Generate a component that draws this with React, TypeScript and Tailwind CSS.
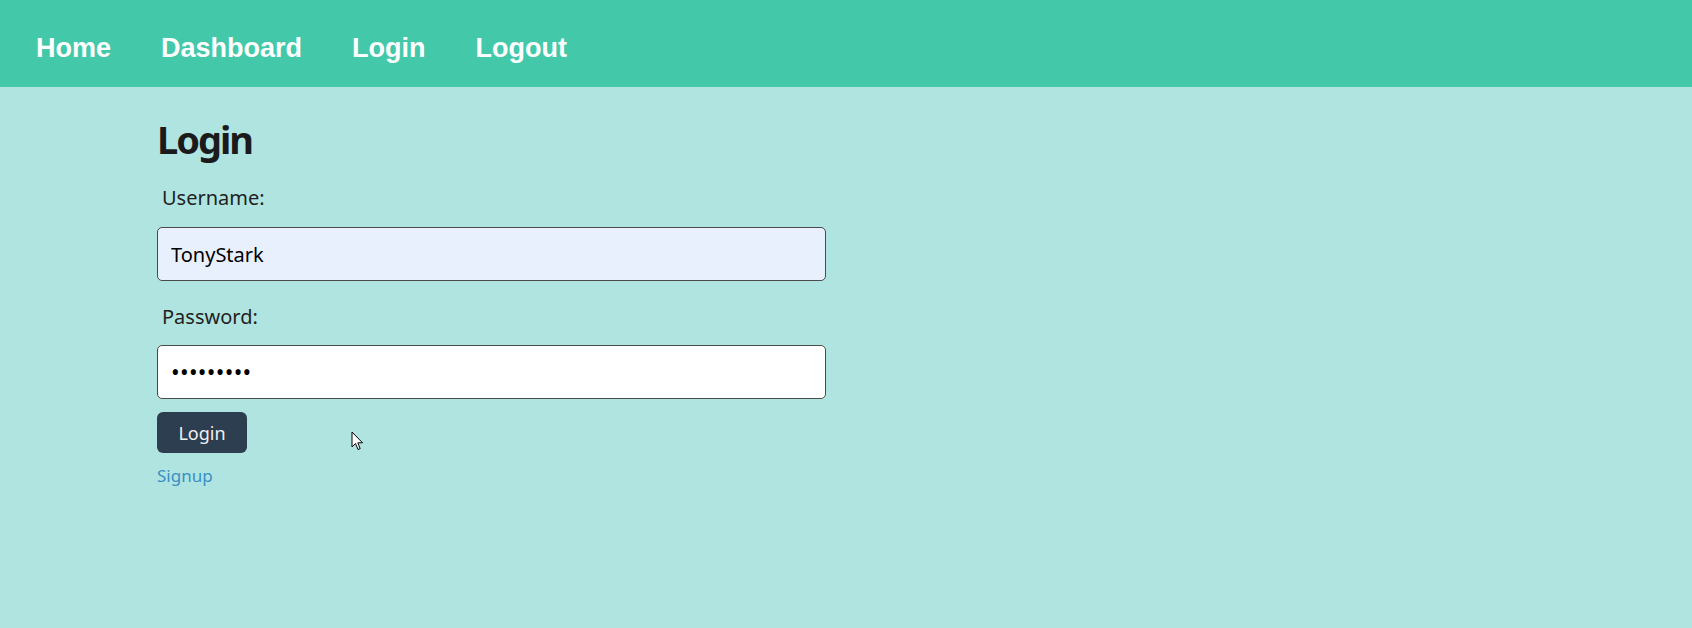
import React from "react";

export default function App() {
  return (
    <div className="min-h-[628px] w-full bg-[#b0e4e1] relative" style={{ fontFamily: '"Noto Sans", sans-serif' }}>
      <nav className="h-[87px] bg-[#43c9aa] pl-[11px] pt-[32px] flex" style={{ fontFamily: '"Liberation Sans", Arial, sans-serif' }}>
        {["Home", "Dashboard", "Login", "Logout"].map((t) => (
          <a key={t} className="px-[25px] text-[27px] leading-[32px] font-bold text-white">
            {t}
          </a>
        ))}
      </nav>
      <div className="ml-[157px] w-[669px] flex flex-col items-start">
        <h1 className="mt-[28px] text-[38px] leading-[48px] font-bold tracking-[-2px] text-[#1b1b1b]">Login</h1>
        <label className="mt-[21px] pl-[5px] text-[20px] leading-[28px] text-[#222]">Username:</label>
        <input
          readOnly
          defaultValue="TonyStark"
          className="mt-[15px] w-[669px] h-[54px] rounded-[5px] border border-[#4a4a4a] bg-[#e8f0fe] px-[13px] text-[20px] text-black outline-none"
        />
        <label className="mt-[22px] pl-[5px] text-[20px] leading-[28px] text-[#222]">Password:</label>
        <input
          readOnly
          type="password"
          defaultValue="TonyStark"
          className="mt-[14px] w-[669px] h-[54px] rounded-[5px] border border-[#4a4a4a] bg-white px-[13px] text-[23px] tracking-[0.3px] text-black outline-none"
        />
        <button className="mt-[13px] w-[90px] h-[41px] pt-[1px] rounded-[6px] bg-[#2c3e50] text-[18px] text-[#f0f0f0]">Login</button>
        <a className="mt-[9px] text-[17px] leading-[28px] text-[#3a8fc4]">Signup</a>
      </div>
      <svg className="absolute left-[351px] top-[431px]" width="13" height="20" viewBox="0 0 13 20">
        <path d="M1 1 L1 16 L4.5 12.5 L7 18.5 L9.2 17.6 L6.8 11.8 L11.5 11.8 Z" fill="white" stroke="black" strokeWidth="1" strokeLinejoin="round" />
      </svg>
    </div>
  );
}
